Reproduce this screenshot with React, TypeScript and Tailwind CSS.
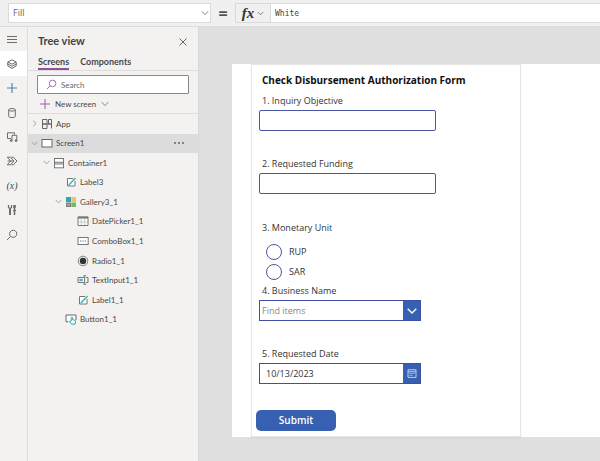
import type { ReactNode } from 'react';

type IconName =
  | 'app' | 'screen' | 'container' | 'label' | 'gallery' | 'date'
  | 'combo' | 'radio' | 'textinput' | 'button';

type TreeNode = {
  name: string;
  icon: IconName;
  indent: string;
  arrow?: 'right' | 'down';
  selected?: boolean;
};

const tree: TreeNode[] = [
  { name: 'App', icon: 'app', indent: 'pl-[3px]', arrow: 'right' },
  { name: 'Screen1', icon: 'screen', indent: 'pl-[3px]', arrow: 'down', selected: true },
  { name: 'Container1', icon: 'container', indent: 'pl-[15px]', arrow: 'down' },
  { name: 'Label3', icon: 'label', indent: 'pl-[27px]' },
  { name: 'Gallery3_1', icon: 'gallery', indent: 'pl-[27px]', arrow: 'down' },
  { name: 'DatePicker1_1', icon: 'date', indent: 'pl-[39px]' },
  { name: 'ComboBox1_1', icon: 'combo', indent: 'pl-[39px]' },
  { name: 'Radio1_1', icon: 'radio', indent: 'pl-[39px]' },
  { name: 'TextInput1_1', icon: 'textinput', indent: 'pl-[39px]' },
  { name: 'Label1_1', icon: 'label', indent: 'pl-[39px]' },
  { name: 'Button1_1', icon: 'button', indent: 'pl-[27px]' },
];

function Chevron({ className = '', dir = 'down' }: { className?: string; dir?: 'down' | 'right' }) {
  return (
    <svg viewBox="0 0 8 8" className={className} fill="none" stroke="currentColor" aria-hidden="true">
      <path d={dir === 'down' ? 'M0.8 2.2 L4 5.6 L7.2 2.2' : 'M2.4 0.8 L5.8 4 L2.4 7.2'} />
    </svg>
  );
}

function Magnifier({ className = '' }: { className?: string }) {
  return (
    <svg viewBox="0 0 12 12" className={className} fill="none" stroke="currentColor" aria-hidden="true">
      <circle cx="7.2" cy="4.8" r="3.6" />
      <path d="M4.6 7.4 L1 11" />
    </svg>
  );
}

const icons: Record<IconName, ReactNode> = {
  app: (
    <path
      d="M1.5 1.5 h4.5 v4.5 h-4.5 z M1.5 6 h4.5 v4.5 h-4.5 z M6 6 h4.5 v4.5 M7.5 1.5 h3 v4.5 h-3 z"
      stroke="#666"
    />
  ),
  screen: <rect x="1" y="2.5" width="10" height="7.5" fill="#fff" stroke="#666" />,
  container: (
    <g stroke="#777" fill="#fff">
      <rect x="1.5" y="1.5" width="9" height="3.8" />
      <rect x="1.5" y="7" width="9" height="3.8" />
      <path d="M1.5 5 v2 M10.5 5 v2" />
    </g>
  ),
  label: (
    <g>
      <path d="M8 2.5 H2.5 v7.5 h7.5 V5" stroke="#777" fill="#fff" />
      <path d="M3.8 9 L10.5 2" stroke="#4fb3ba" strokeWidth="1.8" />
    </g>
  ),
  gallery: (
    <g>
      <rect x="1" y="1" width="5" height="5" fill="#33a5ad" />
      <rect x="6.3" y="1" width="4.7" height="5" fill="#f3bf68" />
      <rect x="1" y="6.5" width="5" height="4.5" fill="#808080" />
      <rect x="6.3" y="6.5" width="4.7" height="4.5" fill="#72b866" />
      <path d="M2.2 8.8 h2.6" stroke="#ccc" />
    </g>
  ),
  date: (
    <g stroke="#777">
      <path d="M1 1.8 h10 v8.7 h-10 z" fill="#fff" />
      <path d="M1 2.8 h10" strokeWidth="1.6" />
      <path d="M4.3 4 v6 M7.6 4 v6 M2 7 h8" stroke="#bbb" strokeWidth="0.8" />
    </g>
  ),
  combo: (
    <g stroke="#777">
      <rect x="1" y="2.5" width="10.2" height="7" fill="#fff" />
      <path d="M3 6 h6.5" strokeDasharray="1.3 1.1" strokeWidth="1.2" />
    </g>
  ),
  radio: (
    <g>
      <circle cx="6" cy="6" r="4.8" stroke="#777" strokeWidth="0.9" />
      <circle cx="6" cy="6" r="3.2" fill="#333" />
    </g>
  ),
  textinput: (
    <g stroke="#777">
      <path d="M7 3.5 H1 v5 h6" fill="#fff" />
      <rect x="2.2" y="4.8" width="3.6" height="2.4" fill="#4fb3ba" stroke="none" />
      <path d="M6.3 1.8 h2.6 M6.3 10.2 h2.6 M7.6 1.8 v8.4 M9 3.5 h2 v5 h-2" />
    </g>
  ),
  button: (
    <g>
      <path d="M3.5 8.8 H1 V2 h10 v5" stroke="#666" fill="#fff" />
      <path
        d="M6.2 8 V4.6 q0.7 -0.8 1.4 0 V6.6 l2.4 0.7 q0.8 0.3 0.5 1.5 l-0.5 2.3 h-3.4 l-1.9 -2.4 q-0.2 -0.9 0.8 -0.7 z"
        fill="#fff"
        stroke="#2ba3ab"
      />
    </g>
  ),
};

function TreeIcon({ name }: { name: IconName }) {
  return (
    <svg viewBox="0 0 12 12" className="size-3 shrink-0" fill="none" aria-hidden="true">
      {icons[name]}
    </svg>
  );
}

const rail: { label: string; art: ReactNode }[] = [
  { label: 'Menu', art: <path d="M1 3.5 h10 M1 6.5 h10 M1 9.5 h10" /> },
  {
    label: 'Tree view',
    art: (
      <g>
        <path d="M1.8 4 L6 1.8 L10.2 4 L6 6.2 Z" />
        <path d="M1.8 4 v4 L6 10.4 L10.2 8 V4 M1.8 6 L6 8.3 L10.2 6" />
      </g>
    ),
  },
  { label: 'Insert', art: <path d="M6 1 v10 M1 6 h10" stroke="#4a86b3" strokeWidth="1.2" /> },
  {
    label: 'Data',
    art: (
      <g>
        <ellipse cx="6" cy="2.8" rx="3.3" ry="1.3" />
        <path d="M2.7 2.8 v6.5 q0 1.3 3.3 1.3 t3.3 -1.3 v-6.5" />
      </g>
    ),
  },
  {
    label: 'Media',
    art: (
      <g>
        <path d="M5 7.5 H1.5 V1.8 h7 V3.5" />
        <path d="M6 9.5 V4.3 h4.8 v5.2" />
        <circle cx="5.2" cy="9.6" r="0.9" fill="currentColor" />
        <circle cx="10" cy="9.6" r="0.9" fill="currentColor" />
      </g>
    ),
  },
  {
    label: 'Power Automate',
    art: (
      <g>
        <path d="M1.2 2.2 h3.2 L8 6 L4.4 9.8 H1.2 L4.6 6 Z" />
        <path d="M5.4 2.2 h2 L11 6 L7.4 9.8 h-2 M1.6 6 h6" />
      </g>
    ),
  },
  { label: 'Variables', art: null },
  {
    label: 'Advanced tools',
    art: (
      <g>
        <path d="M4 5 v6" strokeWidth="2" />
        <path d="M2.5 1 v2.5 q1.5 1.8 3 0 V1" strokeWidth="1.2" />
        <path d="M8.5 1 v3" strokeWidth="2.6" />
        <path d="M8.5 4 v7" strokeWidth="1.6" />
        <path d="M7 6.5 h3" />
      </g>
    ),
  },
  { label: 'Search', art: <path d="M4.6 7.4 L1 11 M7.2 1.2 a3.6 3.6 0 1 1 -0.01 0 z" /> },
];

function Rail() {
  return (
    <nav aria-label="Studio" className="flex w-7 shrink-0 flex-col border-r border-[#dedddc] bg-[#f3f2f1]">
      <div className="grid h-[220px] auto-rows-fr">
        {rail.map((item, i) => (
          <button
            key={item.label}
            type="button"
            aria-label={item.label}
            className={`flex items-center justify-center pr-[3px] text-[#6e6c6a] ${i === 1 ? 'bg-white' : ''}`}
          >
            {item.art ? (
              <svg viewBox="0 0 12 12" className="size-3" fill="none" stroke="currentColor">{item.art}</svg>
            ) : (
              <span className="font-['Liberation_Serif',serif] text-[10px] italic leading-3 text-[#4a4846]">(x)</span>
            )}
          </button>
        ))}
      </div>
    </nav>
  );
}

function FormulaBar() {
  return (
    <header className="flex h-[27px] items-center border-b border-[#dcdcdc] bg-[#f0f0f0] pl-2">
      <div className="relative w-[203px] shrink-0">
        <select
          aria-label="Property"
          className="block h-5 w-full appearance-none border border-[#dadada] bg-white pl-1 font-['Open_Sans',sans-serif] text-[9px] text-[#666]"
        >
          <option>Fill</option>
        </select>
        <Chevron className="pointer-events-none absolute right-[2px] top-[6px] size-2 text-[#888]" />
      </div>
      <span className="w-[24px] shrink-0 text-center text-base font-bold leading-5 text-[#555]">=</span>
      <button
        type="button"
        aria-label="Formula functions"
        className="flex h-5 w-9 shrink-0 items-center justify-center gap-[3px] border border-[#dadada] text-[#333]"
      >
        <span className="font-['Liberation_Serif',serif] text-[15px] font-bold italic leading-4">fx</span>
        <Chevron className="size-[7px] text-[#777]" />
      </button>
      <input
        aria-label="Formula"
        defaultValue="White"
        className="h-5 min-w-0 flex-1 border-y border-[#dadada] bg-white pl-1 font-['DejaVu_Sans_Mono',monospace] text-[8px] text-[#444] outline-none"
      />
    </header>
  );
}

function TreePanel() {
  return (
    <aside className="w-[171px] shrink-0 border-r border-[#d8d8d8] bg-[#f3f2f1] font-['Lato',sans-serif] text-[#4a4846]">
      <div className="flex h-[29px] items-center justify-between pl-[10px] pr-[11px]">
        <h1 className="text-[11px] font-bold text-[#444]">Tree view</h1>
        <button type="button" aria-label="Close" className="text-[#666]">
          <svg viewBox="0 0 8 8" className="size-2" stroke="currentColor">
            <path d="M0.5 0.5 L7.5 7.5 M7.5 0.5 L0.5 7.5" />
          </svg>
        </button>
      </div>
      <div role="tablist" className="flex h-[15px] gap-[11px] border-b border-[#dedddc] pl-[10px] text-[9px] font-bold leading-3">
        <button type="button" role="tab" aria-selected="true" className="h-[14px] border-b-2 border-[#8f4f9b] text-[#444]">
          Screens
        </button>
        <button type="button" role="tab" aria-selected="false" className="h-[14px] border-b-2 border-transparent">
          Components
        </button>
      </div>
      <label className="mx-[9px] mt-1 flex h-[19px] items-center gap-1 rounded-[1px] border border-[#8a8886] bg-white pl-2">
        <Magnifier className="size-[11px] text-[#9c62a6]" />
        <input
          type="text"
          aria-label="Search"
          placeholder="Search"
          className="min-w-0 flex-1 text-[8px] outline-none placeholder:text-[#6a6866]"
        />
      </label>
      <button type="button" className="flex h-[19px] w-full items-center gap-[5px] pl-3 text-[8px]">
        <svg viewBox="0 0 10 10" className="size-[10px] text-[#9c62a6]" stroke="currentColor">
          <path d="M5 0 v10 M0 5 h10" />
        </svg>
        New screen
        <Chevron className="size-2 text-[#888]" />
      </button>
      <ul className="grid h-[216px] auto-rows-fr border-t border-[#dedddc]">
        {tree.map((node) => (
          <li
            key={node.name}
            className={`flex items-center ${node.indent} ${node.selected ? 'bg-[#dcdcdc]' : ''}`}
          >
            <span className="w-[10px] shrink-0 text-[#999]">
              {node.arrow && <Chevron dir={node.arrow} className="size-[7px]" />}
            </span>
            <TreeIcon name={node.icon} />
            <span className="ml-[3px] flex-1 text-[8px]">{node.name}</span>
            {node.selected && (
              <button type="button" aria-label="More" className="mr-[14px]">
                <svg viewBox="0 0 10 4" className="h-1 w-[10px]" fill="#555">
                  <circle cx="1" cy="2" r="0.9" />
                  <circle cx="5" cy="2" r="0.9" />
                  <circle cx="9" cy="2" r="0.9" />
                </svg>
              </button>
            )}
          </li>
        ))}
      </ul>
    </aside>
  );
}

function Field({ id, label, children }: { id: string; label: string; children: ReactNode }) {
  return (
    <div>
      <label htmlFor={id} className="mb-[2px] ml-[3px] block leading-[14px]">{label}</label>
      {children}
    </div>
  );
}

function DisbursementForm() {
  return (
    <form
      onSubmit={(e) => e.preventDefault()}
      className="w-[270px] border border-[#e6e6e6] bg-white pb-[5px] pl-[7px] text-[9px] text-[#333] shadow-xs"
    >
      <h2 className="mb-[6px] ml-[3px] mt-2 text-[10px] font-bold leading-[15px] text-[#111]">
        Check Disbursement Authorization Form
      </h2>
      <div className="flex flex-col gap-[26px]">
        <Field id="objective" label="1. Inquiry Objective">
          <input id="objective" className="block h-[21px] w-[177px] rounded-[2px] border border-[#4a57a3] px-1" />
        </Field>
        <Field id="funding" label="2. Requested Funding">
          <input id="funding" className="block h-[21px] w-[177px] rounded-[2px] border border-[#4a57a3] px-1" />
        </Field>
      </div>
      <fieldset className="mt-[27px]">
        <legend className="mb-[7px] ml-[3px] leading-[14px]">3. Monetary Unit</legend>
        {['RUP', 'SAR'].map((unit) => (
          <label key={unit} className="ml-[7px] flex h-5 items-center gap-[7px]">
            <input
              type="radio"
              name="unit"
              value={unit}
              className="size-4 appearance-none rounded-full border border-[#4a57a3] checked:bg-[#3860b2]"
            />
            {unit}
          </label>
        ))}
      </fieldset>
      <div className="mt-[2px] flex flex-col gap-[26px]">
        <Field id="business" label="4. Business Name">
          <div className="flex h-[21px] w-[162px] border border-[#3f4fa3]">
            <input
              id="business"
              placeholder="Find items"
              className="min-w-0 flex-1 pl-[2px] outline-none placeholder:text-[#888]"
            />
            <button type="button" aria-label="Open list" className="flex w-[17px] items-center justify-center bg-[#3860b2] text-white">
              <svg viewBox="0 0 10 6" className="h-[6px] w-[10px]" fill="none" stroke="currentColor" strokeWidth="1.4">
                <path d="M0.7 0.7 L5 5 L9.3 0.7" />
              </svg>
            </button>
          </div>
        </Field>
        <Field id="date" label="5. Requested Date">
          <div className="flex h-[21px] w-[162px] border border-[#3f4fa3]">
            <input id="date" defaultValue="10/13/2023" className="min-w-0 flex-1 pl-[6px] outline-none" />
            <button type="button" aria-label="Open calendar" className="flex w-[17px] items-center justify-center bg-[#3860b2] text-white">
              <svg viewBox="0 0 10 9" className="h-[9px] w-[10px]" fill="none" stroke="#c3d0ea">
                <path d="M1 0.8 h8 v7.6 h-8 z M1 2.8 h8" />
                <path d="M2.5 4.6 h5 M2.5 6.4 h3" strokeDasharray="1.2 0.6" />
              </svg>
            </button>
          </div>
        </Field>
      </div>
      <button
        type="submit"
        className="-ml-[3px] mt-[26px] block h-[21px] w-20 rounded-[5px] bg-[#3860b2] text-[10px] font-semibold text-white"
      >
        Submit
      </button>
    </form>
  );
}

export default function App() {
  return (
    <div className="flex min-h-screen flex-col bg-[#dfdfdf] font-['Open_Sans',sans-serif]">
      <FormulaBar />
      <div className="flex flex-1">
        <Rail />
        <TreePanel />
        <main className="min-w-0 flex-1 pl-[33px] pt-[37px]">
          <div className="bg-white pl-[19px]">
            <DisbursementForm />
          </div>
        </main>
      </div>
    </div>
  );
}
